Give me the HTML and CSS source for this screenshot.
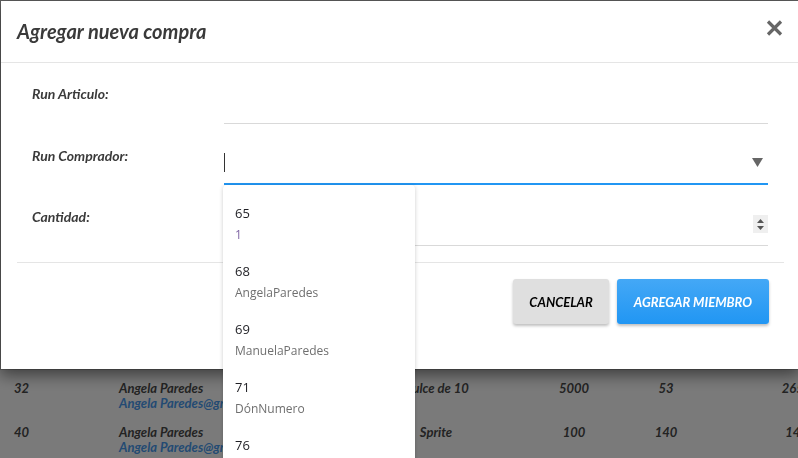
FILE: index.html
```html
<!DOCTYPE html>
<html lang="es">
<head>
<meta charset="utf-8">
<title>Agregar nueva compra</title>
<link rel="stylesheet" href="styles.css">
</head>
<body>
<main class="page">
  <div class="list">
    <div class="list-row">
      <span class="c-id">32</span>
      <span class="c-user"><span class="user-name">Angela Paredes</span><span class="user-mail">Angela Paredes@gmail.com</span></span>
      <span class="c-prod">Dulce de 10</span>
      <span class="c-num">5000</span>
      <span class="c-qty">53</span>
      <span class="c-total">265000</span>
    </div>
    <div class="list-row">
      <span class="c-id">40</span>
      <span class="c-user"><span class="user-name">Angela Paredes</span><span class="user-mail">Angela Paredes@gmail.com</span></span>
      <span class="c-prod">Sprite</span>
      <span class="c-num">100</span>
      <span class="c-qty">140</span>
      <span class="c-total">14000</span>
    </div>
  </div>
</main>

<div class="backdrop"></div>

<div class="modal">
  <header class="modal-header">
    <h4 class="modal-title">Agregar nueva compra</h4>
    <button class="close" type="button" aria-label="Cerrar">
      <svg width="17" height="16" viewBox="0 0 17 16"><path d="M2 1.5 L15 14.5 M15 1.5 L2 14.5" stroke="#666" stroke-width="3.2" fill="none"/></svg>
    </button>
  </header>
  <div class="modal-body">
    <div class="form-row">
      <label class="form-label">Run Articulo:</label>
      <div class="field"></div>
    </div>
    <div class="form-row">
      <label class="form-label">Run Comprador:</label>
      <div class="field field-focus">
        <span class="caret"></span>
        <svg class="select-arrow" width="11" height="9" viewBox="0 0 11 9"><path d="M0 0 H11 L5.5 9 Z" fill="#666"/></svg>
        <ul class="dropdown">
          <li class="option"><span class="opt-num">65</span><span class="opt-name opt-name-alt">1</span></li>
          <li class="option"><span class="opt-num">68</span><span class="opt-name">AngelaParedes</span></li>
          <li class="option"><span class="opt-num">69</span><span class="opt-name">ManuelaParedes</span></li>
          <li class="option"><span class="opt-num">71</span><span class="opt-name">DónNumero</span></li>
          <li class="option"><span class="opt-num">76</span><span class="opt-name">JuanPerez</span></li>
        </ul>
      </div>
    </div>
    <div class="form-row">
      <label class="form-label">Cantidad:</label>
      <div class="field field-number">
        <svg class="spinner" width="15" height="18" viewBox="0 0 15 18"><rect width="15" height="18" fill="#efefef"/><path d="M4 8 L7.5 4 L11 8 Z M4 11 H11 L7.5 15 Z" fill="#555"/></svg>
      </div>
    </div>
  </div>
  <footer class="modal-footer">
    <button class="btn btn-default" type="button">CANCELAR</button>
    <button class="btn btn-primary" type="button">AGREGAR MIEMBRO</button>
  </footer>
</div>
</body>
</html>
```

FILE: styles.css
```css
html, body {
  margin: 0;
  padding: 0;
}

body {
  width: 798px;
  height: 458px;
  overflow: hidden;
  background: #fff;
  font-family: "Lato", "Liberation Sans", sans-serif;
}

.page {
  padding-top: 374px;
}

.list-row {
  display: grid;
  grid-template-columns: 105px 257px 120px 156px 28px 248px;
  padding: 7px 0 7px 14px;
  font-size: 13px;
  line-height: 15px;
  font-weight: 700;
  font-style: italic;
  color: #4a4a4a;
  white-space: nowrap;
}

.c-user {
  display: flex;
  flex-direction: column;
}

.user-mail {
  color: #4a9cf0;
}

.c-prod,
.c-num,
.c-qty,
.c-total {
  text-align: center;
}

.backdrop {
  position: fixed;
  inset: 0;
  background: rgba(0, 0, 0, 0.52);
}

.modal {
  position: fixed;
  top: 0;
  left: 0;
  width: 800px;
  box-sizing: border-box;
  background: #fff;
  background-clip: padding-box;
  border: 1px solid rgba(0, 0, 0, 0.2);
  box-shadow: 0 5px 15px rgba(0, 0, 0, 0.5);
  z-index: 10;
}

.modal-header {
  display: flex;
  justify-content: space-between;
  align-items: flex-start;
  padding: 16px 16px 17px 16px;
  border-bottom: 1px solid #e5e5e5;
}

.modal-title {
  margin: 0;
  font-size: 20px;
  line-height: 28px;
  font-weight: 700;
  font-style: italic;
  color: #3a3a3a;
}

.close {
  margin-top: 3px;
  padding: 0;
  border: 0;
  background: none;
  width: 17px;
  height: 16px;
  display: block;
}

.close svg {
  display: block;
}

.modal-body {
  padding: 0 15px 16px 16px;
}

.form-row {
  display: flex;
}

.form-label {
  flex: 0 0 207px;
  box-sizing: border-box;
  padding: 21px 0 0 15px;
  font-size: 14px;
  line-height: 20px;
  font-weight: 700;
  font-style: italic;
  color: #3a3a3a;
}

.form-row + .form-row .form-label {
  padding-top: 22px;
}

.field {
  position: relative;
  width: 544px;
  height: 61px;
  box-sizing: border-box;
  border-bottom: 1px solid #d9d9d9;
}

.field-focus {
  border-bottom: 2px solid #2196f3;
  display: flex;
  align-items: flex-end;
  padding: 0 5px 11px 0;
}

.caret {
  display: block;
  width: 0;
  height: 19px;
  border-left: 1px solid #333;
}

.select-arrow {
  display: block;
  margin-left: auto;
  margin-bottom: 5px;
}

.field-number {
  display: flex;
  justify-content: flex-end;
  align-items: flex-end;
  padding-bottom: 12px;
}

.spinner {
  display: block;
}

.dropdown {
  position: absolute;
  left: -1px;
  top: calc(100% + 2px);
  width: 192px;
  height: 300px;
  margin: 0;
  padding: 0;
  list-style: none;
  background: #fff;
  border-radius: 4px;
  box-shadow: 0 1px 4px rgba(0, 0, 0, 0.2);
  overflow: hidden;
  z-index: 20;
}

.option {
  display: flex;
  flex-direction: column;
  height: 58px;
  box-sizing: border-box;
  padding: 17px 12px 0 12px;
  font-family: "Open Sans", "Noto Sans", sans-serif;
}

.opt-num {
  font-size: 13px;
  line-height: 22px;
  color: #1f1f24;
}

.opt-name {
  font-size: 12px;
  line-height: 22px;
  color: #6f6f6f;
}

.opt-name-alt {
  color: #7e64a4;
}

.modal-footer {
  display: flex;
  justify-content: flex-end;
  gap: 8px;
  margin: 0 15px 0 16px;
  padding: 16px 15px 45px 0;
  border-top: 1px solid #e5e5e5;
}

.btn {
  height: 45px;
  padding: 0 16px;
  border: 0;
  border-radius: 3px;
  font-family: "Lato", "Liberation Sans", sans-serif;
  font-size: 13px;
  font-weight: 700;
  font-style: italic;
  box-shadow: 0 2px 3px rgba(0, 0, 0, 0.25);
}

.btn-default {
  background: #dfdfdf;
  color: #000;
}

.btn-primary {
  padding: 0 17px;
  background: linear-gradient(#44a8f6, #2196f3);
  color: #fff;
}
```
